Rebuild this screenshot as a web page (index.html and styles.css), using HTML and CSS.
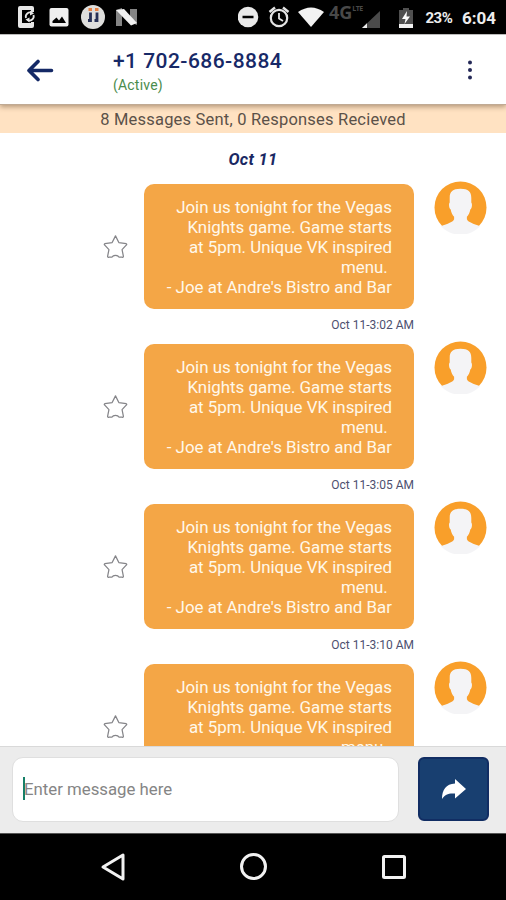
FILE: index.html
```html
<!DOCTYPE html>
<html lang="en">
<head>
<meta charset="utf-8">
<title>Messages</title>
<link rel="stylesheet" href="styles.css">
</head>
<body>
<svg class="defs" width="0" height="0">
  <symbol id="star" viewBox="0 0 24 24"><path d="M12 1.800 L15.200 8.200 L22.300 9.300 Q23.200 9.800 22.500 10.500 L18.300 15 L19.600 21.500 Q19.400 22.600 18.200 22.300 H15.500 Q14.500 20.500 12 20.500 Q9.500 20.500 8.500 22.300 H5.800 Q4.600 22.600 4.400 21.500 L5.700 15 L1.500 10.500 Q.8 9.800 1.700 9.300 L8.800 8.200 Z" fill="#fff" stroke="#858589" stroke-width="1.200" stroke-linejoin="round"/></symbol>
  <symbol id="person" viewBox="0 0 54 54">
    <circle cx="27" cy="27" r="26.500" fill="#f99f2a"/>
    <path d="M27 8 C35 8 38 11 38 17 V22 C39.200 23 38.800 28 37 29 C36.500 32 35 35 33.500 36.500 V39 C34.500 42 40 43.500 47 46 A27.500 27.500 0 0 1 7 46 C14 43.500 19.500 42 20.500 39 V36.500 C19 35 17.500 32 17 29 C15.200 28 14.800 23 16 22 V17 C16 11 19 8 27 8 Z" fill="#f4f4f6"/>
  </symbol>
</svg>
<div class="phone">
  <div class="status">
    <svg class="left-icons" width="124" height="24" viewBox="0 0 124 24">
      <path d="M2 1 H14 Q16 1 16 3 V7 H13 V5 H4 V18 H13 V17 H16 V21 Q16 23 14 23 H2 Q0 23 0 21 V3 Q0 1 2 1 Z" fill="#e6e6e6"/>
      <path d="M8 13 A4.200 4.200 0 0 1 14 8 M15.500 10 A4.200 4.200 0 0 1 9.500 15" fill="none" stroke="#e6e6e6" stroke-width="1.800"/>
      <path d="M12 5.500 L16 8.500 L12 10.500 Z M11.500 12.500 V17.500 L7.500 14.500 Z" fill="#e6e6e6"/>
      <rect x="31.500" y="3" width="19" height="18.500" rx="2" fill="#efefef"/>
      <path d="M34.500 18 V16 L38.500 12.500 L41 15.500 L44 11.500 L48 18 Z" fill="#000"/>
      <circle cx="75" cy="12" r="12" fill="#dededc"/>
      <path d="M72.500 7.500 V15.500 H70 M79 7.500 V15.500 H76.500" fill="none" stroke="#263056" stroke-width="2.800"/>
      <path d="M70.500 4.500 H74 M77 4.500 H80.500" stroke="#e78144" stroke-width="2.800"/>
      <path d="M98 5 L104 3 V21 H98 Z M112 4 H119 V20 L112 17 Z" fill="#858585"/>
      <path d="M98 5 L106 4 L119 18 L113 20.500 Z" fill="#f1f1f1"/>
    </svg>
    <svg class="right-icons" width="86" height="24" viewBox="0 0 86 24">
      <circle cx="10" cy="12" r="10.300" fill="#e9e9e9"/><path d="M4.500 12 H15.500" stroke="#000" stroke-width="2.500"/>
      <circle cx="41" cy="13" r="8.200" fill="none" stroke="#e4e4e4" stroke-width="2.200"/>
      <path d="M41 8 V13.500 L45 16" fill="none" stroke="#e4e4e4" stroke-width="1.800"/><path d="M31.500 7 L37 2.500 M45 2.500 L50.500 7" stroke="#e4e4e4" stroke-width="2.400"/>
      <path d="M60 7 Q73 -2 86 7 L73 22 Z" fill="#f2f2f2"/>
    </svg>
    <span class="network">4G<small>LTE</small></span>
    <svg class="signal" width="18" height="17" viewBox="0 0 18 17"><path d="M18 0 V17 H0 Z" fill="#4a4a4a"/><path d="M5 12.200 V17 H0 Z" fill="#eee"/></svg>
    <svg class="battery" width="14" height="20" viewBox="0 0 14 20"><path d="M0 2 H4 V0 H10 V2 H14 V20 H0 Z" fill="#505050"/><path d="M0 16 H14 V20 H0 Z" fill="#f1f1f1"/><path d="M8 3 L3 11 H6.500 L5.500 16 L11 8.500 H7.500 Z" fill="#fff"/></svg>
    <span class="percent">23%</span>
    <span class="clock">6:04</span>
  </div>
  <header class="header">
    <svg class="back" width="28" height="24" viewBox="0 0 28 24"><path d="M25.500 12.500 H3 M12 3.500 L3 12.500 L12 21.500" fill="none" stroke="#142966" stroke-width="3.600" stroke-linecap="round" stroke-linejoin="round"/></svg>
    <div class="contact"><div class="number">+1 702-686-8884</div><div class="state">(Active)</div></div>
    <svg class="more" width="6" height="20" viewBox="0 0 6 20"><g fill="#242957"><circle cx="3" cy="2.500" r="2"/><circle cx="3" cy="10" r="2"/><circle cx="3" cy="17.500" r="2"/></g></svg>
  </header>
  <div class="banner"><span>8 Messages Sent, 0 Responses Recieved</span></div>
  <main class="thread">
    <div class="date"><span>Oct 11</span></div>
    <article class="message">
      <svg class="star"><use href="#star"/></svg>
      <div class="body"><div class="bubble"><p>Join us tonight for the Vegas</p><p>Knights game. Game starts</p><p>at 5pm. Unique VK inspired</p><p>menu. </p><p>- Joe at Andre's Bistro and Bar</p></div><time>Oct 11-3:02 AM</time></div>
      <svg class="avatar"><use href="#person"/></svg>
    </article>
    <article class="message">
      <svg class="star"><use href="#star"/></svg>
      <div class="body"><div class="bubble"><p>Join us tonight for the Vegas</p><p>Knights game. Game starts</p><p>at 5pm. Unique VK inspired</p><p>menu. </p><p>- Joe at Andre's Bistro and Bar</p></div><time>Oct 11-3:05 AM</time></div>
      <svg class="avatar"><use href="#person"/></svg>
    </article>
    <article class="message">
      <svg class="star"><use href="#star"/></svg>
      <div class="body"><div class="bubble"><p>Join us tonight for the Vegas</p><p>Knights game. Game starts</p><p>at 5pm. Unique VK inspired</p><p>menu. </p><p>- Joe at Andre's Bistro and Bar</p></div><time>Oct 11-3:10 AM</time></div>
      <svg class="avatar"><use href="#person"/></svg>
    </article>
    <article class="message">
      <svg class="star"><use href="#star"/></svg>
      <div class="body"><div class="bubble"><p>Join us tonight for the Vegas</p><p>Knights game. Game starts</p><p>at 5pm. Unique VK inspired</p><p>menu. </p></div></div>
      <svg class="avatar"><use href="#person"/></svg>
    </article>
  </main>
  <div class="composer">
    <div class="field"><i class="caret"></i><span>Enter message here</span></div>
    <div class="send"><svg width="26" height="22" viewBox="0 0 26 22"><path d="M14 1 L25 11 L14 20.500 V15.500 C8 15 4 16 1 21 C1 12 5 6 14 5.500 Z" fill="#fff"/></svg></div>
  </div>
  <nav class="nav">
    <svg width="28" height="30" viewBox="0 0 28 30"><path d="M24 3 V27 L4 15 Z" fill="none" stroke="#f2f2f2" stroke-width="3" stroke-linejoin="round"/></svg>
    <svg width="28" height="30" viewBox="0 0 28 30"><circle cx="13.500" cy="14.500" r="12" fill="none" stroke="#f2f2f2" stroke-width="3"/></svg>
    <svg width="28" height="30" viewBox="0 0 28 30"><rect x="3.500" y="4.500" width="21" height="21" rx="1" fill="none" stroke="#f2f2f2" stroke-width="3"/></svg>
  </nav>
</div>
</body>
</html>
```
FILE: styles.css
```css
* { box-sizing: border-box; }
body { margin: 0; font-family: Roboto, sans-serif; background: #fff; }
p { margin: 0; }
svg { display: block; flex: none; }
.defs { position: absolute; }
.phone { width: 506px; height: 900px; display: flex; flex-direction: column; overflow: hidden; }
.status { height: 34px; flex: none; background: #000; color: #ededed; display: flex; padding: 5px 10px 0 18px; white-space: nowrap; }
.right-icons { margin-left: 96px; }
.network { width: 34px; margin: 0 0 0 5px; font: 700 18px/15px "Open Sans", sans-serif; color: #494949; display: flex; }
.network small { font-size: 7px; line-height: 8px; width: 8px; letter-spacing: -.5px; }
.signal { margin: 6px 0 0 0; }
.battery { margin: 3px 0 0 19px; }
.percent { margin-left: 12px; font-size: 15px; line-height: 26px; font-weight: 700; width: 37px; letter-spacing: -.5px; }
.clock { font-size: 17px; line-height: 26px; font-weight: 700; }
.header { height: 71px; flex: none; background: #fff; display: flex; align-items: center; padding: 0 33px 0 26px; border-top: 1px solid #bbb; border-bottom: 1px solid #c0aa94; box-shadow: 0 2px 5px rgba(70,45,20,.4); position: relative; }
.contact { margin: 0 auto 0 59px; padding-top: 4px; }
.number { font-size: 21px; line-height: 26px; font-weight: 500; color: #172967; letter-spacing: .45px; }
.state { font-size: 14px; line-height: 22px; color: #4a8c4c; letter-spacing: .2px; }
.banner { height: 28px; flex: none; background: #ffe2c2; color: #5b5149; font-size: 16.5px; line-height: 29px; text-align: center; letter-spacing: .2px; }
.thread { flex: 1; min-height: 0; overflow: hidden; }
.date { height: 51px; text-align: center; font-size: 16.5px; line-height: 53px; font-style: italic; font-weight: 700; color: #1a2863; letter-spacing: .3px; }
.message { height: 160px; display: flex; padding-left: 103px; }
.star { width: 25px; height: 25px; margin: 50px 16px 0 0; }
.body { width: 270px; text-align: right; }
.bubble { height: 125px; border-radius: 10px; background: #f4a646; color: #fff8ea; padding: 13px 22px 0 0; font-size: 16.9px; line-height: 20px; white-space: pre; }
time { display: block; font-size: 12px; line-height: 32px; color: #4d506f; }
.avatar { width: 53px; height: 53px; margin: -3px 0 0 20px; }
.composer { height: 87px; flex: none; background: #ececec; border-top: 1px solid #d9d9d9; display: flex; padding: 10px 17px 0 12px; justify-content: space-between; }
.field { width: 387px; height: 65px; border: 1px solid #dfdfdf; border-radius: 11px; background: #fff; display: flex; align-items: center; padding: 0 0 2px 10px; font-size: 16.8px; color: #858585; }
.caret { width: 2px; height: 23px; background: #168068; margin-right: -1px; }
.send { width: 71px; height: 64px; border: 2px solid #112d63; border-radius: 6px; background: #183f70; display: flex; align-items: center; justify-content: center; }
.nav { height: 67px; flex: none; background: #000; border-top: 1px solid #555; display: flex; justify-content: space-between; align-items: center; padding: 0 98px 0 99px; }
```
